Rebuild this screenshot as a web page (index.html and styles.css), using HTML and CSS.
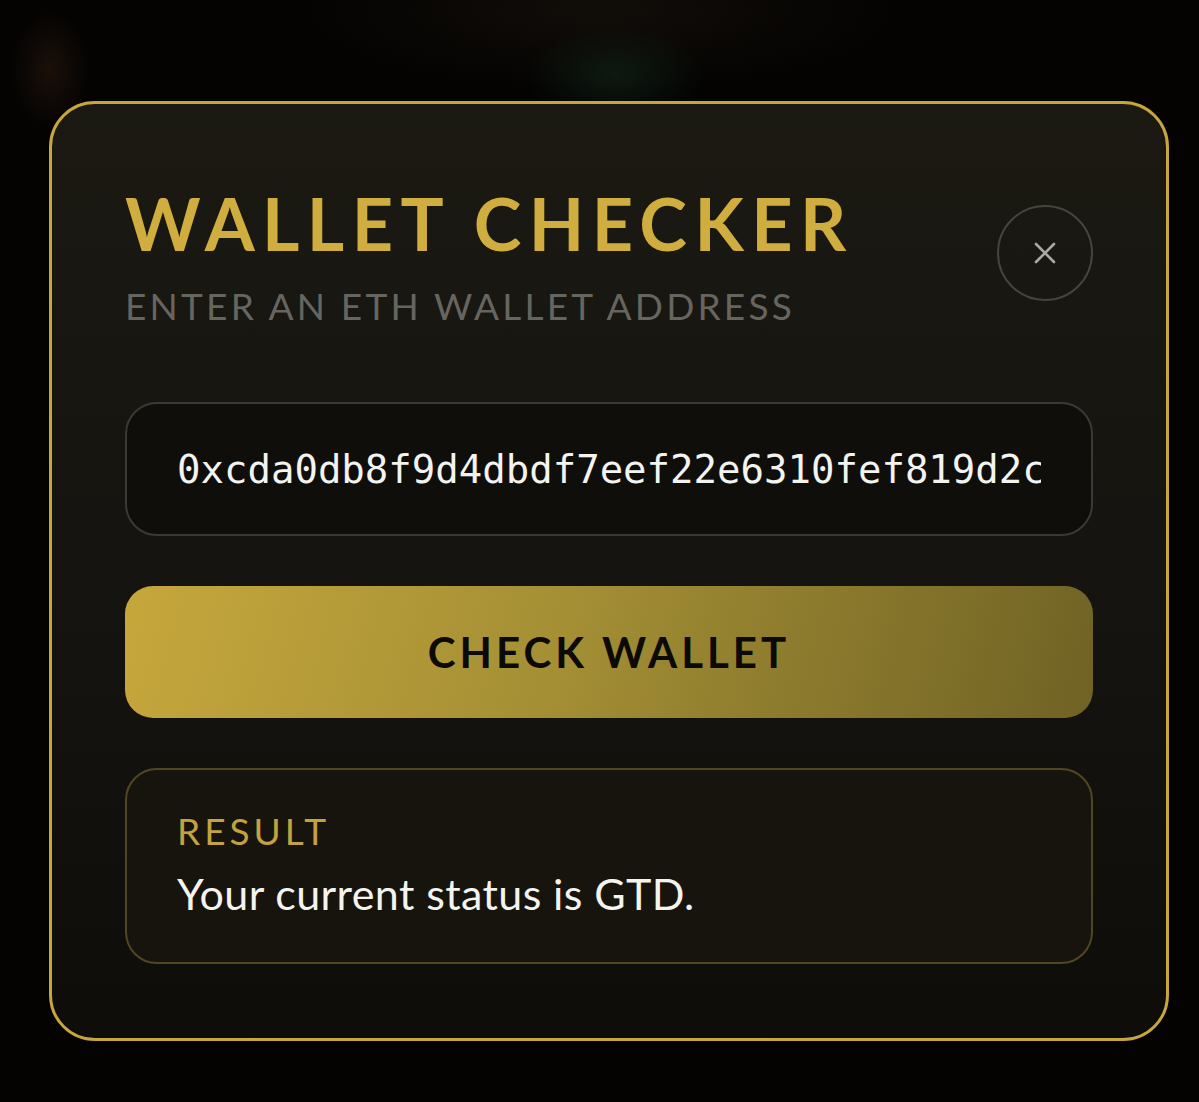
FILE: index.html
```html
<!DOCTYPE html>
<html lang="en">
<head>
<meta charset="utf-8">
<title>Wallet Checker</title>
<link rel="stylesheet" href="styles.css">
</head>
<body>
<div class="backdrop">
  <div class="modal">
    <div class="modal-head">
      <div class="heading">
        <h1 class="title">WALLET CHECKER</h1>
        <p class="subtitle">ENTER AN ETH WALLET ADDRESS</p>
      </div>
      <button class="close" aria-label="Close">
        <svg width="22" height="22" viewBox="0 0 22 22"><path d="M2 2 L20 20 M20 2 L2 20" stroke="#a9a9a6" stroke-width="2.6" stroke-linecap="round"/></svg>
      </button>
    </div>
    <div class="field">
      <span class="address">0xcda0db8f9d4dbdf7eef22e6310fef819d2c4b1a7</span>
    </div>
    <button class="check">CHECK WALLET</button>
    <div class="result">
      <div class="result-label">RESULT</div>
      <div class="result-text">Your current status is GTD.</div>
    </div>
  </div>
</div>
</body>
</html>
```
FILE: styles.css
```css
* { box-sizing: border-box; }
html, body { margin: 0; padding: 0; }
body {
  width: 1199px;
  height: 1102px;
  overflow: hidden;
  background: #040302;
  font-family: Lato, "Open Sans", sans-serif;
}
.backdrop {
  width: 100%;
  height: 100%;
  padding: 101px 30px 0 49px;
  background:
    radial-gradient(ellipse 40px 60px at 50px 70px, rgba(60,35,20,0.4), transparent),
    radial-gradient(ellipse 90px 50px at 615px 75px, rgba(20,45,30,0.5), transparent),
    radial-gradient(ellipse 300px 80px at 600px 10px, rgba(30,22,15,0.5), transparent),
    #040302;
}
.modal {
  width: 1120px;
  height: 940px;
  border: 3px solid #c6a63e;
  border-radius: 46px;
  background: linear-gradient(180deg, #1b1912 0%, #151410 50%, #0e0d0a 100%);
  padding: 83px 73px 0 73px;
  display: flex;
  flex-direction: column;
}
.modal-head {
  display: flex;
  justify-content: space-between;
  align-items: flex-start;
}
.title {
  margin: 0;
  font-size: 72px;
  line-height: 1;
  font-weight: 700;
  color: #cfad3f;
  letter-spacing: 7.4px;
}
.subtitle {
  margin: 28px 0 0 0;
  font-size: 37px;
  line-height: 1;
  font-weight: 400;
  color: #67655f;
  letter-spacing: 3.2px;
}
.close {
  margin-top: 18px;
  width: 96px;
  height: 96px;
  border-radius: 50%;
  border: 2px solid #45443f;
  background: transparent;
  display: flex;
  align-items: center;
  justify-content: center;
  padding: 0;
}
.field {
  margin-top: 78px;
  height: 134px;
  border: 2px solid #3a3936;
  border-radius: 32px;
  background: #0f0e0b;
  padding: 0 50px 0 50px;
  display: flex;
  align-items: center;
  overflow: hidden;
}
.address {
  font-family: "DejaVu Sans Mono", monospace;
  font-size: 39px;
  color: #f3f3f0;
  white-space: nowrap;
  overflow: hidden;
  display: block;
  width: 100%;
}
.check {
  margin-top: 50px;
  height: 132px;
  border: none;
  border-radius: 28px;
  background: linear-gradient(105deg, #c6a73c 0%, #a48f35 45%, #6f6224 100%);
  font-family: Lato, sans-serif;
  font-weight: 700;
  font-size: 42px;
  letter-spacing: 4px;
  color: #0b0a07;
}
.result {
  margin-top: 50px;
  height: 196px;
  border: 2px solid #524622;
  border-radius: 32px;
  background: #17140d;
  padding: 42px 50px 0 50px;
}
.result-label {
  font-size: 37px;
  line-height: 1;
  color: #c3a23f;
  letter-spacing: 4px;
}
.result-text {
  margin-top: 23px;
  font-size: 43px;
  line-height: 1;
  color: #f4f3ee;
  letter-spacing: 0.4px;
}
```
